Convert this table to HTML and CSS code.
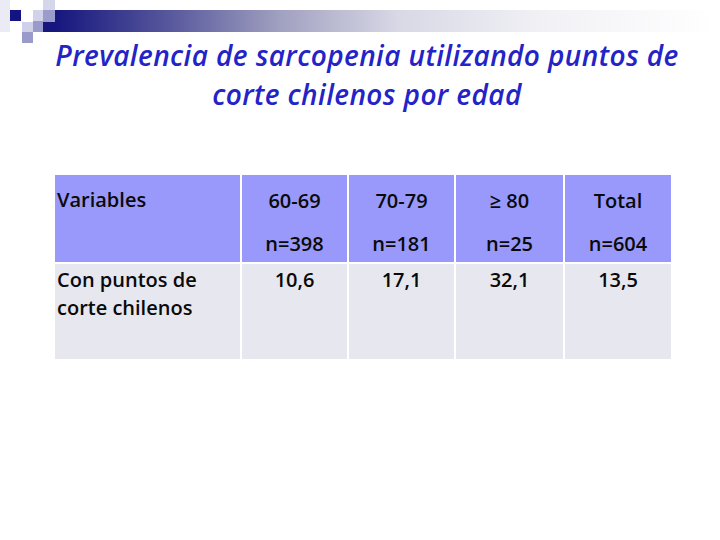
FILE: index.html
```html
<!DOCTYPE html>
<html lang="es">
<head>
<meta charset="utf-8">
<title>Prevalencia de sarcopenia</title>
<link rel="stylesheet" href="styles.css">
</head>
<body>
<div class="slide">
  <div class="topbar">
    <div class="logo">
      <span class="sq s1"></span>
      <span class="sq s2"></span>
      <span class="sq s3"></span>
      <span class="sq s4"></span>
      <span class="sq s5"></span>
      <span class="sq s6"></span>
      <span class="sq s7"></span>
      <span class="sq s8"></span>
      <span class="sq s9"></span>
    </div>
    <div class="bar"></div>
  </div>
  <h1 class="title">Prevalencia de sarcopenia utilizando puntos de<br>corte chilenos por edad</h1>
  <div class="table">
    <div class="cell head first">Variables</div>
    <div class="cell head num"><span>60-69</span><span>n=398</span></div>
    <div class="cell head num"><span>70-79</span><span>n=181</span></div>
    <div class="cell head num"><span>≥ 80</span><span>n=25</span></div>
    <div class="cell head num"><span>Total</span><span>n=604</span></div>
    <div class="cell body first">Con puntos de<br>corte chilenos</div>
    <div class="cell body num"><span>10,6</span></div>
    <div class="cell body num"><span>17,1</span></div>
    <div class="cell body num"><span>32,1</span></div>
    <div class="cell body num"><span>13,5</span></div>
  </div>
</div>
</body>
</html>
```
FILE: styles.css
```css
html, body {
  margin: 0;
  padding: 0;
  background: #ffffff;
}
.slide {
  width: 720px;
  height: 540px;
  position: relative;
  overflow: hidden;
  font-family: "Open Sans", "Lato", sans-serif;
}
.topbar {
  height: 36px;
  position: relative;
}
.logo {
  position: absolute;
  left: 0;
  top: 0;
  width: 56px;
  height: 44px;
  z-index: 1;
}
.sq {
  position: absolute;
  display: block;
}
.s1 { left: 0; top: 0; width: 10px; height: 32px; background: #ebebf6; }
.s2 { left: 10px; top: 10px; width: 11px; height: 11px; background: #141480; }
.s3 { left: 33px; top: 10px; width: 10px; height: 11px; background: #d2d2ea; }
.s4 { left: 43px; top: 0; width: 12px; height: 10px; background: #d6d6ea; }
.s5 { left: 43px; top: 10px; width: 12px; height: 12px; background: #9c9ccc; }
.s6 { left: 22px; top: 22px; width: 11px; height: 10px; background: #d0d0e8; }
.s7 { left: 33px; top: 21px; width: 10px; height: 11px; background: #9a9acc; }
.s8 { left: 43px; top: 22px; width: 12px; height: 10px; background: #16167e; }
.s9 { left: 22px; top: 32px; width: 11px; height: 11px; background: #9a9acb; }
.bar {
  position: absolute;
  left: 55px;
  top: 10px;
  width: 660px;
  height: 22px;
  background: linear-gradient(to right, #16167e 0%, #5a5a9e 18%, #a0a0c0 34%, #d8d8e6 52%, #f2f2f6 75%, #ffffff 100%);
}
.title {
  margin: 0;
  text-align: center;
  font-family: "Open Sans", "Lato", sans-serif;
  font-style: italic;
  font-weight: 600;
  font-size: 28px;
  letter-spacing: 0.4px;
  line-height: 39px;
  color: #2323c8;
  width: 734px;
}
.table {
  margin: 61px 0 0 55px;
  width: 616px;
  display: grid;
  grid-template-columns: 185px 105px 105px 107px 106px;
  grid-template-rows: 87px 95px;
  column-gap: 2px;
  row-gap: 2px;
}
.cell {
  font-size: 20px;
  font-weight: 600;
  color: #0a0a0a;
  line-height: 28px;
  box-sizing: border-box;
}
.head { background: #9999fb; }
.body { background: #e7e7ef; }
.first {
  padding: 11px 0 0 2px;
}
.body.first { padding-top: 2px; }
.num {
  display: flex;
  flex-direction: column;
  align-items: center;
  padding-top: 12px;
  gap: 15px;
}
.body.num { padding-top: 2px; }
```
